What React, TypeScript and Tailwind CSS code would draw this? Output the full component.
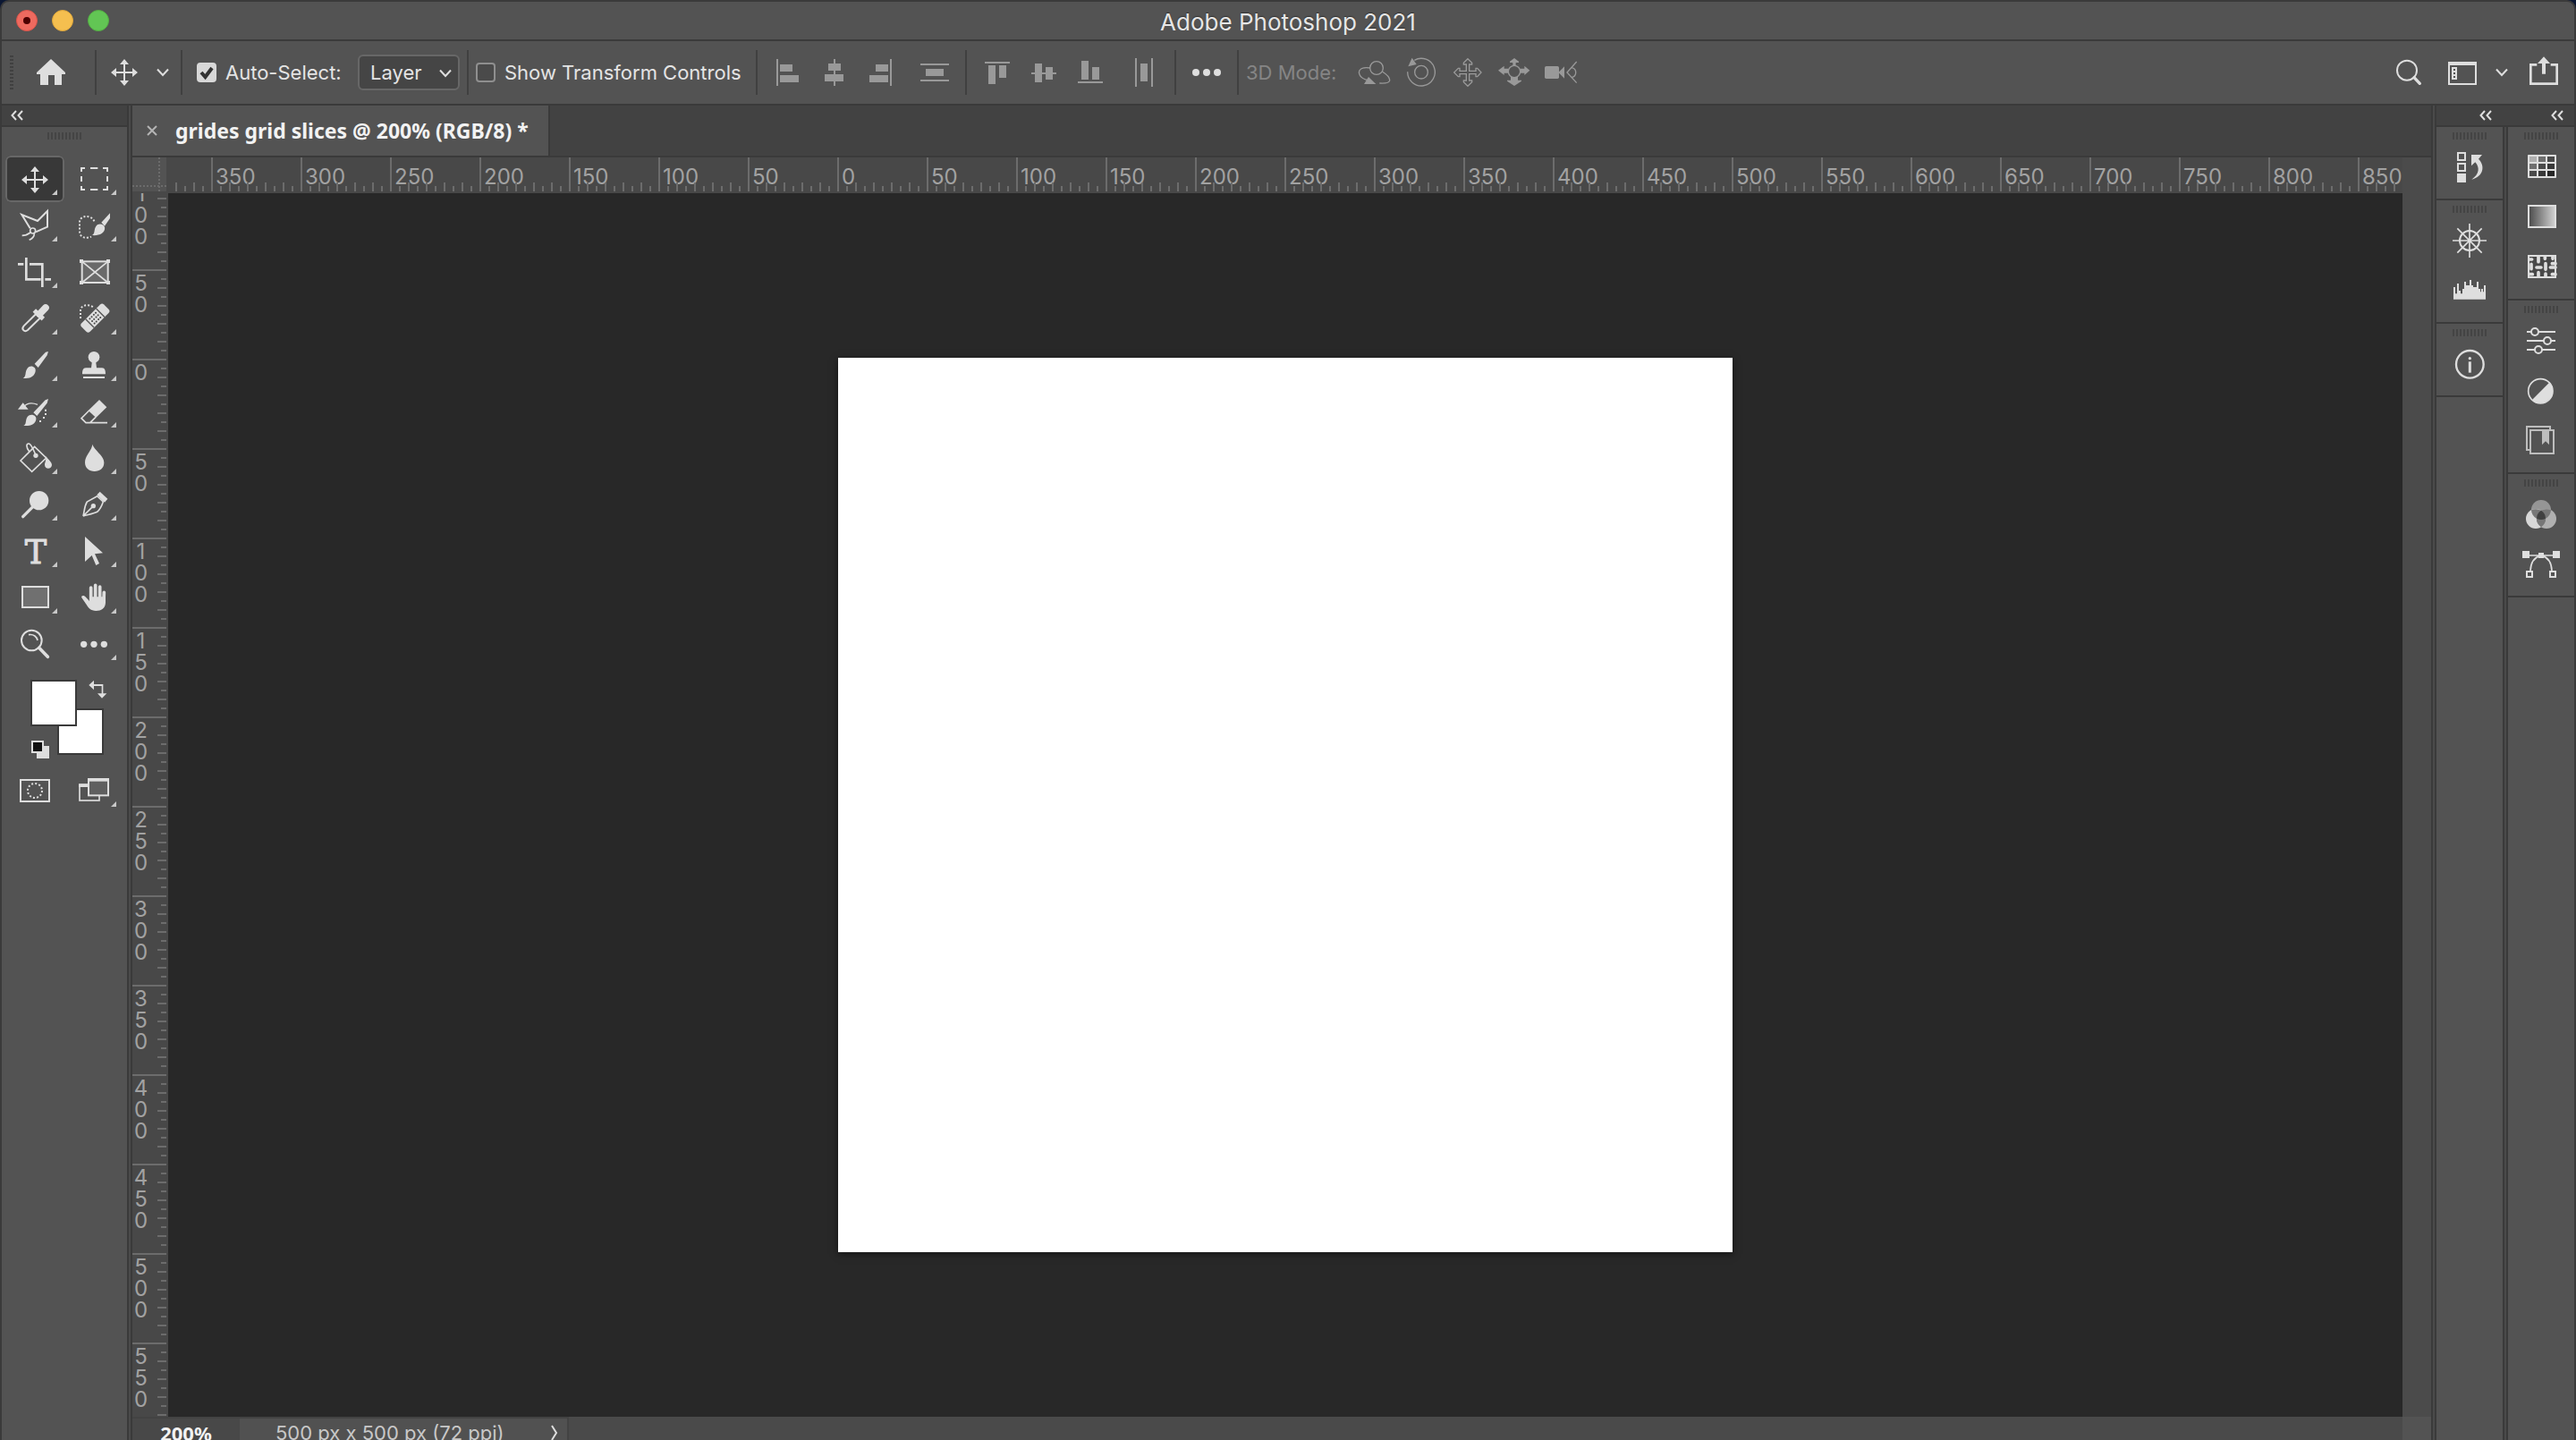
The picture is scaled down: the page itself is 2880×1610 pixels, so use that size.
import type { ReactNode } from "react";

type Icon = {
  label: string;
  view: string;
  art: ReactNode;
};

type Tool = Icon & {
  single?: boolean;
  active?: boolean;
};

const moveArt = (
  <>
    <path d="M117 240V306M84 273H150" strokeWidth="6" />
    <path
      d="M117 228L132 246H102ZM117 318L132 300H102ZM72 273L90 258V288ZM162 273L144 258V288Z"
      fill="currentColor"
      stroke="none"
    />
  </>
);

const tools: Tool[] = [
  { label: "Move", view: "18 192", active: true, art: moveArt },
  {
    label: "Rectangular marquee",
    view: "216 192",
    art: (
      <path
        d="M285 234H273V246M273 261V279M273 294V306H285M303 306H328M345 306H360V294M360 279V261M360 246V234H345M328 234H303"
        strokeWidth="6"
      />
    ),
  },
  {
    label: "Polygonal lasso",
    view: "18 348",
    art: (
      <g strokeWidth="6">
        <path d="M101 436L73 390L126 411L159 378V431L120 448" />
        <circle cx="110" cy="444" r="9" strokeWidth="5" />
        <path d="M74 460C84 460 94 456 102 450M98 475C110 470 115 464 115 453" strokeWidth="5" />
      </g>
    ),
  },
  {
    label: "Quick selection",
    view: "216 348",
    art: (
      <>
        <path d="M316 412C308 390 267 390 267 416V444C267 470 290 470 306 464" strokeWidth="6" strokeDasharray="6 6" />
        <path
          d="M369 385V402L351 428L340 416ZM308 459C320 455 314 440 322 429C330 417 348 421 351 432C354 449 335 462 308 459Z"
          fill="currentColor"
          stroke="none"
        />
      </>
    ),
  },
  {
    label: "Crop",
    view: "18 504",
    art: <path d="M60 556H79M88 534V607H137M151 607H171M99 556H142V633" strokeWidth="8" />,
  },
  {
    label: "Frame",
    view: "216 504",
    single: true,
    art: (
      <>
        <rect x="275" y="547" width="87" height="71" fill="#6a6a6a" strokeWidth="6" />
        <path d="M275 547L362 618M362 547L275 618" strokeWidth="5" />
        <path
          d="M267 540h12v12h-12zM357 540h12v12h-12zM267 612h12v12h-12zM357 612h12v12h-12z"
          fill="currentColor"
          stroke="none"
        />
      </>
    ),
  },
  {
    label: "Eyedropper",
    view: "18 660",
    art: (
      <>
        <path d="M120 724L80 763C70 774 82 786 93 777L134 737" strokeWidth="6" />
        <path d="M132 724L153 702" strokeWidth="23" strokeLinecap="round" />
        <path d="M115 711L145 740" strokeWidth="15" />
      </>
    ),
  },
  {
    label: "Spot healing brush",
    view: "216 660",
    art: (
      <>
        <path d="M270 738V712C270 692 300 688 314 702" strokeWidth="6" strokeDasharray="6 6" />
        <g transform="translate(319 737) rotate(-45)" stroke="none">
          <rect x="-53" y="-20" width="106" height="40" rx="9" fill="currentColor" />
          <path d="M-27 -20h4v40h-4zM23 -20h4v40h-4z" fill="#535353" />
          <g fill="#454545">
            {[-14, -5, 5, 14].map((x) =>
              [-11, 0, 11].map((y) => <circle key={`${x} ${y}`} cx={x} cy={y} r="3" />)
            )}
          </g>
        </g>
      </>
    ),
  },
  {
    label: "Brush",
    view: "18 816",
    art: (
      <path
        d="M162 849L153 851L116 890L128 903L158 862ZM77 938C90 932 82 918 92 905C102 892 122 900 119 915C116 932 100 942 77 938Z"
        fill="currentColor"
        stroke="none"
      />
    ),
  },
  {
    label: "Clone stamp",
    view: "216 816",
    art: (
      <g fill="currentColor" stroke="none">
        <circle cx="315" cy="868" r="19" />
        <path d="M309 880H321L324 904H342C352 904 354 914 354 925H276C276 914 278 904 288 904H306Z" />
        <path d="M279 933H351V939H279Z" />
      </g>
    ),
  },
  {
    label: "History brush",
    view: "18 42",
    art: (
      <>
        <path d="M80 104C92 90 108 90 126 97" strokeWidth="4" />
        <path
          d="M60 113L77 91L95 113ZM162 78L152 82L112 124L124 135L158 92ZM79 168C90 163 84 150 92 138C102 125 124 132 121 147C118 164 100 170 79 168ZM150 113h6v6h-6zM150 126h6v6h-6zM144 138h6v6h-6zM132 150h6v6h-6z"
          fill="currentColor"
          stroke="none"
        />
      </>
    ),
  },
  {
    label: "Eraser",
    view: "216 42",
    art: (
      <>
        <path d="M333 81L358 106L322 141L296 117Z" fill="currentColor" stroke="none" />
        <path d="M299 117L273 143L288 158H302L321 139M288 158H360" strokeWidth="5" />
      </>
    ),
  },
  {
    label: "Paint bucket",
    view: "18 198",
    art: (
      <>
        <path d="M69 285L116 238L155 276L107 322Z" strokeWidth="5" />
        <path d="M99 256C86 240 88 227 97 228C106 230 112 250 119 264" strokeWidth="5" />
        <circle cx="120" cy="268" r="8" fill="currentColor" stroke="none" />
        <path
          d="M153 270C163 282 174 290 174 300C173 315 150 315 150 299C150 290 156 286 153 270Z"
          fill="currentColor"
          stroke="none"
        />
      </>
    ),
  },
  {
    label: "Blur",
    view: "216 198",
    art: (
      <path
        d="M310 230C316 250 349 268 349 292C349 311 335 321 317 321C299 321 285 310 285 291C285 268 308 252 310 230Z"
        fill="currentColor"
        stroke="none"
      />
    ),
  },
  {
    label: "Dodge",
    view: "18 354",
    art: (
      <>
        <circle cx="131" cy="419" r="32" fill="currentColor" stroke="none" />
        <path d="M110 440L77 473" strokeWidth="10" strokeLinecap="round" />
      </>
    ),
  },
  {
    label: "Pen",
    view: "216 354",
    art: (
      <>
        <path d="M279 471C284 450 283 438 292 423L326 404L346 423C341 438 334 450 326 457C312 464 296 466 279 471L311 439" strokeWidth="5" />
        <circle cx="313" cy="437" r="8" fill="currentColor" stroke="none" />
        <path d="M325 400L335 389L361 413L351 425Z" fill="currentColor" stroke="none" />
      </>
    ),
  },
  {
    label: "Type",
    view: "18 510",
    art: (
      <text
        x="120"
        y="629"
        fontSize="110"
        textAnchor="middle"
        fill="currentColor"
        strokeWidth="3"
        className="font-['DejaVu_Serif',serif]"
      >
        T
      </text>
    ),
  },
  {
    label: "Path selection",
    view: "216 510",
    art: <path d="M285 540L345 595L318 598L333 630L322 636L308 603L285 624Z" fill="currentColor" stroke="none" />,
  },
  {
    label: "Rectangle",
    view: "18 666",
    art: <rect x="75" y="708" width="87" height="69" fill="#707070" strokeWidth="6" />,
  },
  {
    label: "Hand",
    view: "216 666",
    art: (
      <>
        <path d="M305 711V752M320 703V752M335 708V752M349 727L348 756" strokeWidth="11" strokeLinecap="round" />
        <path
          d="M300 742H354V762C353 780 340 789 322 789C304 789 296 778 290 768L274 745C271 737 282 735 288 743L300 756Z"
          fill="currentColor"
          stroke="none"
        />
      </>
    ),
  },
  {
    label: "Zoom",
    view: "18 822",
    single: true,
    art: (
      <>
        <circle cx="106" cy="888" r="34" strokeWidth="6" />
        <path d="M96 869C113 866 124 876 126 888" strokeWidth="5" />
        <path d="M131 913L160 943" strokeWidth="11" strokeLinecap="round" />
      </>
    ),
  },
  {
    label: "Edit toolbar",
    view: "216 822",
    art: (
      <g fill="currentColor" stroke="none">
        <circle cx="281" cy="901" r="11" />
        <circle cx="315" cy="901" r="11" />
        <circle cx="349" cy="901" r="11" />
      </g>
    ),
  },
];

const modeTools: Tool[] = [
  {
    label: "Quick mask mode",
    view: "18 504",
    single: true,
    art: (
      <>
        <rect x="69" y="546" width="96" height="72" strokeWidth="6" />
        <circle cx="117" cy="582" r="24" strokeWidth="6" strokeDasharray="6 6.57" />
      </>
    ),
  },
  {
    label: "Screen mode",
    view: "216 504",
    art: (
      <>
        <rect x="267" y="562" width="66" height="53" strokeWidth="5" />
        <path d="M264 559H336V570H264Z" fill="currentColor" stroke="none" />
        <rect x="297" y="544" width="66" height="54" fill="#5f5f5f" strokeWidth="6" />
        <path d="M294 540H366V551H294Z" fill="currentColor" stroke="none" />
      </>
    ),
  },
];

const alignLeft: Icon[] = [
  { label: "Align left edges", view: "855 61", art: <path d="M868 66h2v30h-2zM872 72h14v8h-14zM872 84h21v8h-21z" /> },
  { label: "Align horizontal centers", view: "907 61", art: <path d="M932 66h2v30h-2zM926 71h14v8h-14zM922 83h21v8h-21z" /> },
  { label: "Align right edges", view: "959 61", art: <path d="M995 66h2v30h-2zM979 72h14v8h-14zM972 84h21v8h-21z" /> },
];

const distributeVertical: Icon = {
  label: "Distribute vertically",
  view: "1019 61",
  art: <path d="M1029 71h32v2h-32zM1035 77h20v8h-20zM1029 89h32v2h-32z" />,
};

const alignTop: Icon[] = [
  { label: "Align top edges", view: "1089 61", art: <path d="M1101 69h28v2h-28zM1105 73h8v21h-8zM1117 73h8v14h-8z" /> },
  { label: "Align vertical centers", view: "1141 61", art: <path d="M1153 81h28v2h-28zM1157 71h8v21h-8zM1169 75h8v14h-8z" /> },
  { label: "Align bottom edges", view: "1193 61", art: <path d="M1205 91h28v2h-28zM1209 68h8v21h-8zM1221 75h8v14h-8z" /> },
];

const distributeHorizontal: Icon = {
  label: "Distribute horizontally",
  view: "1253 61",
  art: <path d="M1269 65h2v32h-2zM1275 71h8v20h-8zM1287 65h2v32h-2z" />,
};

const modes3d: Icon[] = [
  {
    label: "Orbit the 3D camera",
    view: "423 183",
    art: (
      <>
        <path d="M486 228C460 223 445 233 449 247C452 259 465 266 478 269M526 240C545 252 552 262 551 270C550 278 535 280 517 279" />
        <circle cx="507" cy="228" r="22" />
        <path d="M465 282L480 258L505 282Z" fill="currentColor" stroke="none" />
      </>
    ),
  },
  {
    label: "Roll the 3D camera",
    view: "579 183",
    art: (
      <>
        <circle cx="657" cy="242" r="22" />
        <path d="M611 241A46 46 0 1 0 634 202" />
        <path d="M613 223L626 194L641 216Z" fill="currentColor" stroke="none" />
      </>
    ),
  },
  {
    label: "Pan the 3D camera",
    view: "735 183",
    art: (
      <path d="M813 197L827 211V216H818V238H840V229H845L858 243L845 257H840V248H818V270H827V275L813 289L799 275V270H808V248H786V257H781L767 243L781 229H786V238H808V216H799V211Z" />
    ),
  },
  {
    label: "Slide the 3D camera",
    view: "891 183",
    art: (
      <>
        <circle cx="969" cy="240" r="20" />
        <path
          d="M969 195L984 206V210H974V220H964V210H954V206ZM969 288L993 272V269H981V258H957V269H945V272ZM915 236L935 221V230H950V245H935V252ZM1021 236L1003 221V230H988V245H1003V252Z"
          fill="currentColor"
          stroke="none"
        />
      </>
    ),
  },
  {
    label: "Zoom the 3D camera",
    view: "1047 183",
    art: (
      <>
        <rect x="1071" y="222" width="48" height="42" rx="5" fill="currentColor" stroke="none" />
        <path d="M1117 243L1137 223V263Z" fill="currentColor" stroke="none" />
        <path d="M1178 207L1146 243L1178 278M1161 227C1180 230 1180 256 1161 260" />
      </>
    ),
  },
];

const innerPanels: Icon[][] = [
  [
    {
      label: "History",
      view: "537 501",
      art: (
        <>
          <path d="M564 513h24v24h-24zM564 549h24v24h-24z" strokeWidth="6" />
          <path
            d="M561 582h30v30h-30zM609 519H645L633 533C656 556 650 592 610 602C636 585 638 562 622 544L609 556Z"
            fill="currentColor"
            stroke="none"
          />
        </>
      ),
    },
  ],
  [
    {
      label: "Navigator",
      view: "537 747",
      art: (
        <>
          <circle cx="603" cy="807" r="33" strokeWidth="6" />
          <path d="M603 750V864M546 807H660M562 766L644 848M644 766L562 848" strokeWidth="5" />
        </>
      ),
    },
    {
      label: "Histogram",
      view: "537 915",
      art: (
        <path
          d="M549 1004V963H555V985H561V951H567V975H573V985H579V969H585V945H591V957H597V957H603V939H609V957H615V963H621V963H627V945H633V969H639V979H642V969H648V979H651V957H657V1004Z"
          fill="currentColor"
          stroke="none"
        />
      ),
    },
  ],
  [
    {
      label: "Info",
      view: "537 1161",
      art: (
        <>
          <circle cx="604" cy="1222" r="46" strokeWidth="7" />
          <circle cx="604" cy="1202" r="5" fill="currentColor" stroke="none" />
          <path d="M604 1213V1250" strokeWidth="9" />
        </>
      ),
    },
  ],
];

const outerPanels: Icon[][] = [
  [
    {
      label: "Swatches",
      view: "777 501",
      art: (
        <g stroke="none">
          <rect x="798" y="519" width="96" height="78" rx="2" fill="currentColor" />
          <path d="M804 525h24v18h-24z" fill="#b0b0b0" />
          <path d="M834 525h24v18h-24zM804 549h24v18h-24z" fill="#6f6f6f" />
          <path d="M864 525h24v18h-24zM834 549h24v18h-24zM804 573h24v18h-24z" fill="#4a4a4a" />
          <path d="M864 549h24v18h-24zM834 573h24v18h-24z" fill="#383838" />
          <path d="M864 573h24v18h-24z" fill="#262626" />
        </g>
      ),
    },
    {
      label: "Gradients",
      view: "777 669",
      art: (
        <>
          <defs>
            <linearGradient id="gradients-fill">
              <stop offset="0" stopColor="#4a4a4a" />
              <stop offset="1" stopColor="#d4d4d4" />
            </linearGradient>
          </defs>
          <rect x="801" y="690" width="90" height="72" fill="url(#gradients-fill)" strokeWidth="6" />
        </>
      ),
    },
    {
      label: "Patterns",
      view: "777 837",
      art: (
        <>
          <rect x="801" y="858" width="90" height="72" fill="#484848" strokeWidth="6" />
          <path
            d="M834 861V878M858 884V904M828 897H843M810 886V902M834 914V927M804 870H812M804 920H814M856 861V868M880 884H891M874 897H891M858 918V927M880 920H891M882 861V868"
            strokeWidth="11"
            strokeLinecap="round"
          />
        </>
      ),
    },
  ],
  [
    {
      label: "Properties",
      view: "777 1083",
      art: (
        <g strokeWidth="6">
          <path d="M795 1113H891M795 1143H891M795 1173H891" />
          <circle cx="822" cy="1113" r="12" fill="#535353" />
          <circle cx="864" cy="1143" r="12" fill="#535353" />
          <circle cx="834" cy="1173" r="12" fill="#535353" />
        </g>
      ),
    },
    {
      label: "Adjustments",
      view: "777 1251",
      art: (
        <>
          <circle cx="841" cy="1312" r="41" strokeWidth="5" />
          <path d="M872 1282A43 43 0 0 1 816 1346L813 1341Z" fill="currentColor" stroke="none" />
        </>
      ),
    },
    {
      label: "Libraries",
      view: "777 99",
      art: (
        <g className="text-[#bdbdbd]" stroke="currentColor" strokeWidth="6">
          <path d="M804 189H795V111H873V121" />
          <rect x="807" y="123" width="78" height="78" />
          <path d="M846 125H870V172L858 160L846 172Z" fill="currentColor" stroke="none" />
        </g>
      ),
    },
  ],
  [
    {
      label: "Channels",
      view: "777 345",
      art: (
        <g stroke="none">
          <circle cx="843" cy="390" r="33" fill="#959595" />
          <circle cx="825" cy="420" r="33" fill="#d8d8d8" />
          <circle cx="861" cy="420" r="33" fill="#b0b0b0" />
          <path
            d="M843 392A33 33 0 0 1 843 448A33 33 0 0 1 843 392ZM810 391A33 33 0 0 1 858 419A33 33 0 0 1 810 391ZM876 391A33 33 0 0 1 828 419A33 33 0 0 1 876 391Z"
            fill="#777777"
          />
          <path d="M843 392A33 33 0 0 1 858 419A33 33 0 0 1 828 419A33 33 0 0 1 843 392Z" fill="#404040" />
        </g>
      ),
    },
    {
      label: "Paths",
      view: "777 513",
      art: (
        <>
          <path d="M790 543H896M807 595C808 570 818 550 840 544M879 595C878 570 868 550 846 544" strokeWidth="5" />
          <path d="M780 528h24v24h-24zM882 528h24v24h-24zM834 534h18v18h-18z" fill="currentColor" stroke="none" />
          <path d="M795 597h18v18h-18zM873 597h18v18h-18z" strokeWidth="6" />
        </>
      ),
    },
  ],
];

const horizontalMarks = Array.from({ length: 26 }, (_, i) => Math.abs(i * 50 - 400));
const verticalMarks = Array.from({ length: 14 }, (_, i) => Math.abs(i * 50 - 100));
const steps = [1, 2, 3, 4, 5, 6, 7, 8, 9];

const Separator = () => <div className="mx-2 h-[50px] w-0.5 shrink-0 bg-[#404040]" />;

const Gripper = () => (
  <div className="mx-auto mt-1.5 flex h-2 w-[38px] shrink-0 gap-0.5">
    {[...steps, 10].map((bar) => (
      <span key={bar} className="w-0.5 bg-[#444444]" />
    ))}
  </div>
);

const Gutter = () => <div className="w-1.5 shrink-0 border-x-2 border-[#3a3a3a] bg-[#4a4a4a]" />;

const Chevron = ({ className = "" }: { className?: string }) => (
  <svg viewBox="0 0 16 10" className={`h-2.5 w-4 text-[#dedede] ${className}`} fill="none" stroke="currentColor" strokeWidth="2">
    <path d="M2 1.5L8 8L14 1.5" />
  </svg>
);

const Collapse = () => (
  <svg viewBox="0 0 14 12" className="h-3 w-3.5" fill="none" stroke="#dedede" strokeWidth="2">
    <path d="M6 1L1.5 6L6 11M13 1L8.5 6L13 11" />
  </svg>
);

const ToolButton = ({ tool }: { tool: Tool }) => {
  const [x, y] = tool.view.split(" ").map(Number);
  return (
    <button
      aria-label={tool.label}
      className={`h-[52px] w-[66px] rounded-md text-[#dedede] ${
        tool.active ? "bg-[#383838] shadow-[inset_0_0_0_2px_#676767]" : ""
      }`}
    >
      <svg viewBox={`${tool.view} 198 156`} className="size-full" fill="none" stroke="currentColor">
        {tool.art}
        {!tool.single && <path d={`M${x + 174} ${y + 114}V${y + 132}H${x + 156}Z`} fill="#c8c8c8" stroke="none" />}
      </svg>
    </button>
  );
};

const AlignButton = ({ icon }: { icon: Icon }) => (
  <button aria-label={icon.label} className="h-10 w-[52px] shrink-0 text-[#999999]">
    <svg viewBox={`${icon.view} 52 40`} className="size-full" fill="currentColor">
      {icon.art}
    </svg>
  </button>
);

const BarButton = ({ icon, className = "" }: { icon: Icon; className?: string }) => (
  <button aria-label={icon.label} className={`size-10 shrink-0 text-[#dedede] ${className}`}>
    <svg viewBox={`${icon.view} 120 120`} className="size-full" fill="none" stroke="currentColor">
      {icon.art}
    </svg>
  </button>
);

const CheckOption = ({ label, checked, className }: { label: string; checked?: boolean; className: string }) => (
  <label className={`flex shrink-0 items-center whitespace-nowrap ${className}`}>
    <span className="relative size-[22px] shrink-0">
      <input
        type="checkbox"
        defaultChecked={checked}
        className="peer block size-[22px] appearance-none rounded border-2 border-[#8f8f8f] bg-[#4a4a4a] checked:border-[#d8d8d8] checked:bg-[#d8d8d8]"
      />
      <svg
        viewBox="0 0 22 22"
        className="pointer-events-none absolute inset-0 hidden peer-checked:block"
        fill="none"
        stroke="#333333"
        strokeWidth="4"
      >
        <path d="M5 11L9.500 16L17 6" />
      </svg>
    </span>
    <span className="ml-2.5">{label}</span>
  </label>
);

const PanelColumn = ({ groups }: { groups: Icon[][] }) => (
  <div className="w-[74px] bg-[#535353]">
    {groups.map((group, index) => (
      <div key={index} className="flex flex-col border-b-2 border-[#3a3a3a] pb-[7px]">
        <Gripper />
        <div className="mt-[3px] flex flex-col items-center">
          {group.map((icon) => (
            <button key={icon.label} aria-label={icon.label} className="flex h-14 w-full items-center justify-center text-[#dedede]">
              <svg viewBox={`${icon.view} 132 120`} className="h-10 w-11" fill="none" stroke="currentColor">
                {icon.art}
              </svg>
            </button>
          ))}
        </div>
      </div>
    ))}
  </div>
);

const TitleBar = () => (
  <header className="flex h-11 shrink-0 items-center border-b-2 border-[#3a3a3a] px-4">
    <div className="flex flex-1 gap-4">
      <button aria-label="Close" className="flex size-6 items-center justify-center rounded-full border border-[#d9544a] bg-[#ee6a5f]">
        <span className="size-2 rounded-full bg-[#4d0000]" />
      </button>
      <button aria-label="Minimize" className="size-6 rounded-full border border-[#dfa73c] bg-[#f5bf4f]" />
      <button aria-label="Maximize" className="size-6 rounded-full border border-[#53ad43] bg-[#62c654]" />
    </div>
    <h1 className="pt-1 text-[26px] leading-8 text-[#e6e6e6] [text-shadow:0_-1px_1px_#333]">Adobe Photoshop 2021</h1>
    <div className="flex-1" />
  </header>
);

const OptionsBar = () => (
  <div className="flex h-[72px] shrink-0 items-center border-b-2 border-[#3a3a3a] text-[22px] text-[#e4e4e4]">
    <div className="ml-[9px] flex flex-col gap-0.5">
      {[...steps, 10].map((bar) => (
        <span key={bar} className="h-0.5 w-1 bg-[#404040]" />
      ))}
    </div>
    <button aria-label="Home" className="flex w-[83px] shrink-0 justify-center text-[#dedede]">
      <svg viewBox="0 0 40 40" className="size-10" fill="currentColor">
        <path d="M20 5L36 20V22H32V34H24V23H17V34H8V22H4V20Z" />
      </svg>
    </button>
    <Separator />
    <button aria-label="Tool presets" className="-ml-2 flex shrink-0 items-center gap-4 pr-1 pl-3 text-[#dedede]">
      <svg viewBox="60 216 114 114" className="size-[38px]" fill="none" stroke="currentColor">
        {moveArt}
      </svg>
      <Chevron />
    </button>
    <Separator />
    <CheckOption label="Auto-Select:" checked className="ml-2 w-[180px]" />
    <div className="relative w-[114px] shrink-0">
      <select
        aria-label="Auto-select target"
        className="block h-10 w-full appearance-none rounded-md border-2 border-[#676767] bg-[#454545] pl-3"
      >
        <option>Layer</option>
        <option>Group</option>
      </select>
      <Chevron className="pointer-events-none absolute top-4 right-2" />
    </div>
    <Separator />
    <CheckOption label="Show Transform Controls" className="w-[305px]" />
    <Separator />
    {alignLeft.map((icon) => (
      <AlignButton key={icon.label} icon={icon} />
    ))}
    <div className="w-2 shrink-0" />
    <AlignButton icon={distributeVertical} />
    <Separator />
    {alignTop.map((icon) => (
      <AlignButton key={icon.label} icon={icon} />
    ))}
    <div className="w-2 shrink-0" />
    <AlignButton icon={distributeHorizontal} />
    <Separator />
    <button aria-label="More align options" className="flex w-[52px] shrink-0 items-center justify-center gap-1">
      <span className="size-2 rounded-full bg-[#dedede]" />
      <span className="size-2 rounded-full bg-[#dedede]" />
      <span className="size-2 rounded-full bg-[#dedede]" />
    </button>
    <Separator />
    <span className="w-[118px] shrink-0 whitespace-nowrap text-[#858585]">3D Mode:</span>
    {modes3d.map((icon) => (
      <button key={icon.label} aria-label={icon.label} className="h-10 w-[52px] shrink-0 text-[#999999]">
        <svg viewBox={`${icon.view} 156 120`} className="size-full" fill="none" stroke="currentColor" strokeWidth="4">
          {icon.art}
        </svg>
      </button>
    ))}
    <div className="ml-auto flex items-center pr-3.5">
      <BarButton
        icon={{
          label: "Search",
          view: "342 183",
          art: (
            <>
              <circle cx="396" cy="236" r="33" strokeWidth="6" />
              <path d="M420 260L439 280" strokeWidth="10" strokeLinecap="round" />
            </>
          ),
        }}
      />
      <BarButton
        className="ml-5"
        icon={{
          label: "Workspace",
          view: "519 183",
          art: (
            <>
              <rect x="534" y="210" width="90" height="72" strokeWidth="6" />
              <path d="M534 214H624" strokeWidth="10" />
              <path
                d="M543 225H561V267H543ZM549 231V237H555V231ZM549 243V249H555V243ZM549 255V261H555V255Z"
                fill="currentColor"
                stroke="none"
              />
            </>
          ),
        }}
      />
      <button aria-label="Choose a workspace" className="mr-[11px] ml-4">
        <Chevron />
      </button>
      <BarButton
        className="ml-2"
        icon={{
          label: "Share",
          view: "792 183",
          art: (
            <>
              <path d="M829 217H808V281H896V217H875" strokeWidth="8" />
              <path d="M852 190L873 213H858V248H846V213H831Z" fill="currentColor" stroke="none" />
            </>
          ),
        }}
      />
    </div>
  </div>
);

const Toolbar = () => (
  <aside className="w-[140px] shrink-0">
    <div className="flex h-6 items-center border-b-2 border-[#3a3a3a] bg-[#424242] pl-2.5">
      <button aria-label="Collapse tools">
        <Collapse />
      </button>
    </div>
    <Gripper />
    <div className="mt-[18px] grid grid-cols-[66px_66px] justify-center">
      {tools.map((tool) => (
        <ToolButton key={tool.label} tool={tool} />
      ))}
    </div>
    <div className="relative mx-auto h-28 w-[132px]">
      <button aria-label="Background color" className="absolute top-[46px] left-[58px] size-[52px] border-2 border-[#3a3a3a] bg-white" />
      <button aria-label="Foreground color" className="absolute top-3.5 left-7 size-[52px] border-2 border-[#3a3a3a] bg-white" />
      <button aria-label="Swap colors" className="absolute top-3.5 left-[92px] size-[22px]">
        <svg viewBox="294 210 66 66" className="size-full" fill="#dedede">
          <path d="M298 228L315 212V225H346V256H358L342 272L327 256H341V231H315V244Z" />
        </svg>
      </button>
      <button aria-label="Default colors" className="absolute top-[82px] left-[29px] size-5">
        <svg viewBox="0 0 20 20" className="size-full" fill="#dedede">
          <path d="M6 6h14v14H6z" />
          <path d="M1 1h12v12H1z" fill="#111111" stroke="#dedede" strokeWidth="2" />
        </svg>
      </button>
    </div>
    <div className="grid grid-cols-[66px_66px] justify-center">
      {modeTools.map((tool) => (
        <ToolButton key={tool.label} tool={tool} />
      ))}
    </div>
  </aside>
);

const HorizontalRuler = () => (
  <div className="flex h-10 min-w-0 flex-1 justify-center overflow-hidden bg-[#484848] pr-0.5">
    {horizontalMarks.map((mark, index) => (
      <div key={index} className="relative h-[38px] w-[100px] shrink-0 border-l-2 border-[#6c6c6c] pt-2 pl-[3px]">
        {index > 0 && <span className="block text-[24px] leading-7">{mark}</span>}
        <svg viewBox="0 0 98 38" className="absolute inset-0 h-[38px] w-[98px]" fill="#6c6c6c">
          {steps.map((step) => (
            <rect key={step} x={step * 10 - 2} y={step % 2 ? 32 : 28} width="2" height="10" />
          ))}
        </svg>
      </div>
    ))}
  </div>
);

const VerticalRuler = () => (
  <div className="flex w-10 shrink-0 flex-col justify-center overflow-hidden bg-[#484848] pt-0.5">
    {verticalMarks.map((mark, index) => (
      <div key={index} className="relative h-[100px] w-[38px] shrink-0 border-t-2 border-[#6c6c6c] pt-0.5">
        {String(mark)
          .split("")
          .map((digit, position) => (
            <span key={position} className="block w-[19px] text-center text-[24px] leading-6">
              {digit}
            </span>
          ))}
        <svg viewBox="0 0 38 98" className="absolute inset-0 h-[98px] w-[38px]" fill="#6c6c6c">
          {steps.map((step) => (
            <rect key={step} x={step % 2 ? 32 : 28} y={step * 10 - 2} width="10" height="2" />
          ))}
        </svg>
      </div>
    ))}
  </div>
);

const DocumentArea = () => (
  <main className="flex min-w-0 flex-1 flex-col">
    <div className="flex h-[58px] shrink-0 border-b-2 border-[#3a3a3a] bg-[#424242]">
      <div className="flex items-center border-r-2 border-[#3a3a3a] bg-[#535353] pr-[22px] pl-4">
        <button aria-label="Close document">
          <svg viewBox="0 0 12 12" className="size-3" fill="none" stroke="#b4b4b4" strokeWidth="2">
            <path d="M1 1L11 11M11 1L1 11" />
          </svg>
        </button>
        <span className="ml-5 font-['Noto_Sans',sans-serif] text-[23px] font-bold whitespace-nowrap text-[#f2f2f2]">
          grides grid slices @ 200% (RGB/8) *
        </span>
      </div>
    </div>
    <div className="flex min-h-0 flex-1">
      <div className="flex min-w-0 flex-1 flex-col text-[#a2a2a2]">
        <div className="flex shrink-0">
          <svg viewBox="0 0 40 40" className="size-10 shrink-0 bg-[#484848]">
            <path d="M0 0h38v38H0z" fill="#535353" />
            <path d="M30 0V38M0 32H38" stroke="#6c6c6c" strokeWidth="2" strokeDasharray="2 2" />
          </svg>
          <HorizontalRuler />
        </div>
        <div className="flex min-h-0 flex-1">
          <VerticalRuler />
          <div className="flex min-w-0 flex-1 items-center justify-center overflow-hidden bg-[#282828]">
            <div className="size-[1000px] shrink-0 bg-white shadow-[0_2px_8px_rgba(0,0,0,0.5)]" />
          </div>
        </div>
      </div>
      <div className="w-8 shrink-0 bg-[#4b4b4b]" />
    </div>
    <footer className="flex h-[26px] shrink-0 overflow-hidden bg-[#4a4a4a] text-[22px] leading-8">
      <div className="w-[120px] shrink-0 border-t-2 border-[#434343] bg-[#484848] text-center font-['Noto_Sans',sans-serif] font-bold text-[#f2f2f2]">
        200%
      </div>
      <button className="flex w-[368px] shrink-0 justify-between border-t-2 border-r-2 border-[#434343] bg-[#515151] pr-2.5 pl-10 text-[#c8c8c8]">
        500 px x 500 px (72 ppi)
        <svg viewBox="0 0 8 18" className="mt-[7px] h-[18px] w-2" fill="none" stroke="#dedede" strokeWidth="2">
          <path d="M1 1L6 9L1 17" />
        </svg>
      </button>
      <div className="ml-auto w-8 bg-[#535353]" />
    </footer>
  </main>
);

const PanelDock = () => (
  <aside className="flex shrink-0 flex-col">
    <div className="flex h-6 shrink-0 items-center justify-end border-b-2 border-[#3a3a3a] bg-[#424242] pr-3">
      <button aria-label="Expand inner panels" className="mr-[66px]">
        <Collapse />
      </button>
      <button aria-label="Expand outer panels">
        <Collapse />
      </button>
    </div>
    <div className="flex flex-1">
      <PanelColumn groups={innerPanels} />
      <Gutter />
      <PanelColumn groups={outerPanels} />
    </div>
  </aside>
);

const App = () => {
  return (
    <div className="h-screen overflow-hidden bg-[#0b1733] font-['Inter',sans-serif]">
      <div className="flex h-full flex-col overflow-hidden rounded-t-[10px] border-x-2 border-t-2 border-[#3a3a3a] bg-[#535353]">
        <TitleBar />
        <OptionsBar />
        <div className="flex min-h-0 flex-1">
          <Toolbar />
          <Gutter />
          <DocumentArea />
          <Gutter />
          <PanelDock />
        </div>
      </div>
    </div>
  );
};

export default App;
